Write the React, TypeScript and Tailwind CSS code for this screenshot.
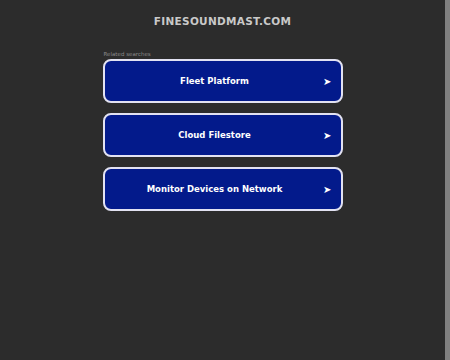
const searches = ["Fleet Platform", "Cloud Filestore", "Monitor Devices on Network"]

export default function App() {
  return (
    <div className="flex h-[360px] w-[450px] bg-[#2c2c2c] font-['DejaVu_Sans',sans-serif]">

      {/* main */}
      <div className="flex flex-1 flex-col items-center">
        <h1 className="mt-[14px] text-[10.5px] font-bold leading-[15px] tracking-[0.3px] text-[#c9c9c9]">
          FINESOUNDMAST.COM
        </h1>

        <div className="mt-[21px] w-[240px]">
          <p className="pl-[1px] text-[5.5px] leading-[8px] text-[#8a8a8a]">
            Related searches
          </p>

          <div className="mt-[1px] flex flex-col gap-[10px]">
            {searches.map((s) => (
              <div
                key={s}
                className="relative flex h-[44px] items-center justify-center rounded-[8px] border-2 border-[#e2e2f2] bg-[#031a8b] pr-[16px]"
              >
                <span className="text-[8.5px] font-bold text-white">
                  {s}
                </span>
                <span className="absolute right-[9px] top-[13px] text-[10px] text-white">
                  ➤
                </span>
              </div>
            ))}
          </div>
        </div>
      </div>

      {/* scrollbar strip */}
      <div className="w-[5px] bg-[#808080]" />
    </div>
  )
}
